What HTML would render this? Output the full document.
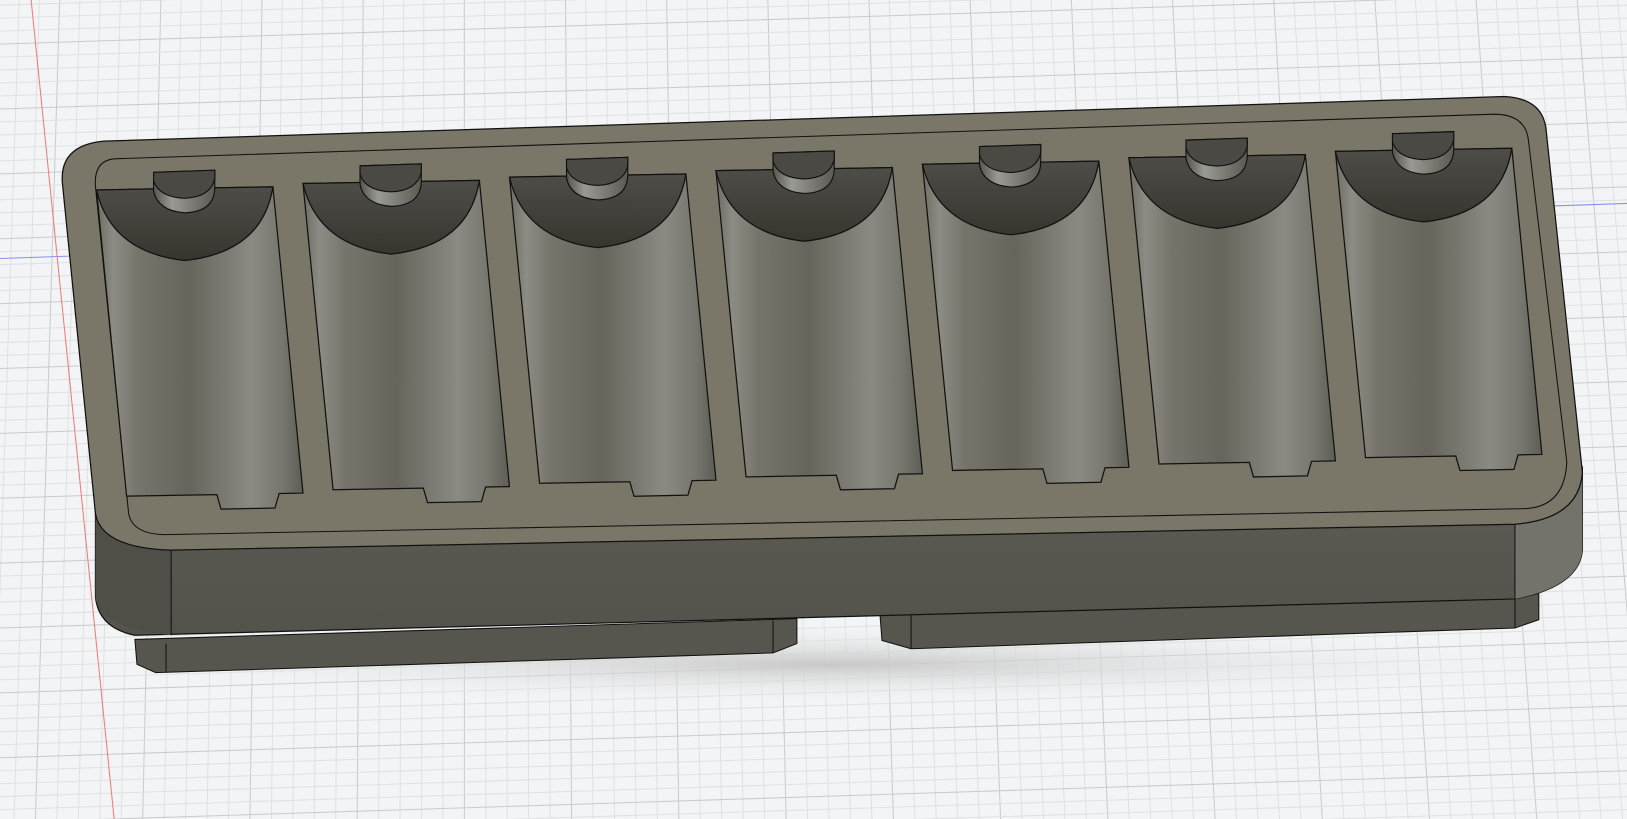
<!DOCTYPE html>
<html><head><meta charset="utf-8"><style>
html,body{margin:0;padding:0;width:1627px;height:819px;overflow:hidden;background:#f3f4f5}
svg{display:block}
</style></head><body>
<svg id="s" width="1627" height="819" viewBox="0 0 1568 789" preserveAspectRatio="none" xmlns="http://www.w3.org/2000/svg">
<defs>
<linearGradient id="pk" x1="0" x2="1" y1="0" y2="0">
<stop offset="0" stop-color="#6e6c63"/><stop offset="0.08" stop-color="#8d8c84"/><stop offset="0.2" stop-color="#77756b"/>
<stop offset="0.45" stop-color="#67655b"/><stop offset="0.75" stop-color="#8a8a83"/><stop offset="0.9" stop-color="#77766d"/><stop offset="1" stop-color="#5e5d55"/>
</linearGradient>
<linearGradient id="cy" x1="0" x2="0" y1="0" y2="1">
<stop offset="0" stop-color="#4e4d48"/><stop offset="1" stop-color="#36362f"/>
</linearGradient>
<linearGradient id="tb" x1="0" x2="1"><stop offset="0" stop-color="#55544d"/><stop offset="0.3" stop-color="#9a9a94"/><stop offset="1" stop-color="#5a5952"/></linearGradient>
<linearGradient id="fr" x1="0" x2="0" y1="0" y2="1"><stop offset="0" stop-color="#5d5b53"/><stop offset="1" stop-color="#54534b"/></linearGradient>
<radialGradient id="sh" cx="0.5" cy="0.5" r="0.5"><stop offset="0" stop-color="#c8c8c8"/><stop offset="1" stop-color="#f3f4f5" stop-opacity="0"/></radialGradient>
</defs>
<g id="grid"></g>
<line x1="0" y1="249" x2="1568" y2="196" stroke="#8a8ff0" stroke-width="1"/>
<line x1="30" y1="0" x2="110" y2="789" stroke="#f07a7a" stroke-width="1"/>
<ellipse cx="800" cy="640" rx="760" ry="40" fill="url(#sh)"/>
<!-- feet -->
<path d="M130,616 L768,596 L768,620 L745,629 L150,648 L132,640 Z" fill="#57564e" stroke="#111" stroke-width="1"/>
<line x1="160" y1="620" x2="160" y2="648" stroke="#111"/>
<line x1="745" y1="598" x2="745" y2="629" stroke="#111"/>
<path d="M848,591 L1483,572 L1483,597 L1460,605 L878,625 L850,617 Z" fill="#57564e" stroke="#111" stroke-width="1"/>
<line x1="878" y1="592" x2="878" y2="625" stroke="#111"/>
<line x1="1460" y1="575" x2="1460" y2="605" stroke="#111"/>
<!-- front face -->
<path d="M92,490 L92,575 Q95,605 130,612 L1460,577 Q1522,565 1525,530 L1525,450 Z" fill="url(#fr)" stroke="#111" stroke-width="1.2"/>
<path d="M1460,505 L1460,577 Q1522,565 1525,530 L1525,455 Q1522,495 1460,505Z" fill="#74736b"/>
<path d="M92,495 L92,575 Q95,605 165,612 L165,530 Q100,520 92,495Z" fill="#4f4e47"/>
<line x1="165" y1="530" x2="165" y2="612" stroke="#111"/>
<line x1="1460" y1="505" x2="1460" y2="577" stroke="#111"/>
<!-- top face -->
<path d="M100,136 L1450,93 Q1487,95 1490,125 L1525,455 Q1522,500 1460,505 L165,530 Q98,528 92,495 L60,175 Q58,140 100,136Z" fill="#7a7668" stroke="#111" stroke-width="1.2"/>
<path d="M110,153 L1440,110 Q1470,110 1473,135 L1510,445 Q1508,488 1470,490 L160,515 Q128,515 124,495 L92,180 Q90,155 110,153Z" fill="none" stroke="#111" stroke-width="1"/>
<g id="pockets"></g>
</svg>
<script>
var g=document.getElementById('grid'),h='';
for(var i=0;i<90;i++){var x=-40+i*19.5;var c=(i%5==0)?'#c9cbce':'#dfe1e3';h+='<line x1="'+x+'" y1="0" x2="'+(x+(x-780)*0.06+20)+'" y2="789" stroke="'+c+'" stroke-width="1"/>';}
for(var j=0;j<70;j++){var y=-20+j*12.5;var c=(j%5==0)?'#c9cbce':'#dfe1e3';h+='<line x1="0" y1="'+y+'" x2="1568" y2="'+(y-50)+'" stroke="'+c+'" stroke-width="1"/>';}
g.innerHTML=h;
var p=document.getElementById('pockets'),s='';
for(var k=0;k<7;k++){
var x0=93+199*k,y0=183-6.2*k,w=170,dy=-3;
var tl=[x0,y0],tr=[x0+w,y0+dy],br=[x0+w+29,y0+dy+295],bl=[x0+29,y0+295];
var nb1=x0+29+87,nb2=x0+29+147;
var fy=function(x){return bl[1]+(x-bl[0])*(br[1]-bl[1])/(br[0]-bl[0]);};
s+='<path d="M'+tl+' L'+tr+' L'+br+' L'+nb2+','+fy(nb2)+' L'+(nb2-4)+','+(fy(nb2)+14)+' L'+(nb1+4)+','+(fy(nb1)+14)+' L'+nb1+','+fy(nb1)+' L'+bl+' Z" fill="url(#pk)" stroke="#111" stroke-width="1.2"/>';
var cx=x0+w/2;
s+='<path d="M'+tl+' L'+tr+' Q'+(x0+w-10)+','+(y0+60)+' '+cx+','+(y0+68)+' Q'+(x0+14)+','+(y0+60)+' '+tl+' Z" fill="url(#cy)" stroke="#111" stroke-width="1.2"/>';
var tx=x0+55,ty=y0-17;
s+='<path d="M'+tx+','+ty+' L'+(tx+59)+','+(ty-2)+' L'+(tx+59)+','+(ty+16)+' Q'+(tx+58)+','+(ty+38)+' '+(tx+30)+','+(ty+39)+' Q'+(tx+4)+','+(ty+37)+' '+tx+','+(ty+18)+' Z" fill="url(#tb)" stroke="#111" stroke-width="1.1"/>';
s+='<path d="M'+tx+','+ty+' L'+(tx+59)+','+(ty-2)+' L'+(tx+59)+','+(ty+6)+' Q'+(tx+55)+','+(ty+24)+' '+(tx+30)+','+(ty+25)+' Q'+(tx+5)+','+(ty+24)+' '+tx+','+(ty+8)+' Z" fill="#4a4944" stroke="#111" stroke-width="1.1"/>';
}
p.innerHTML=s;
</script>
</body></html>
